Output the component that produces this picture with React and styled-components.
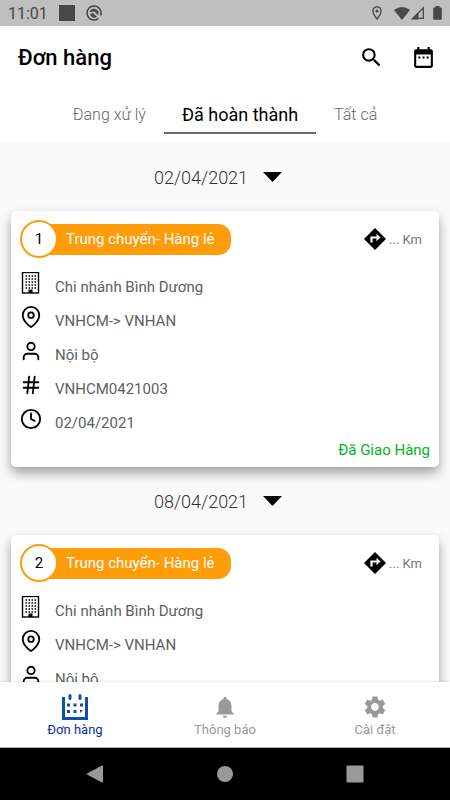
import React, { useState } from 'react';
import styled, { createGlobalStyle } from 'styled-components';
import { MdSearch, MdDateRange, MdNotifications, MdSettings } from 'react-icons/md';
import { FiMapPin, FiUser, FiHash, FiClock } from 'react-icons/fi';

const GlobalStyle = createGlobalStyle`
  * {
    box-sizing: border-box;
  }
  body {
    margin: 0;
    background: #fafafa;
    font-family: Roboto, 'Noto Sans', sans-serif;
  }
  button {
    border: 0;
    padding: 0;
    background: none;
    font: inherit;
    color: inherit;
    cursor: pointer;
  }
`;

const Screen = styled.div`
  display: flex;
  flex-direction: column;
  height: 100vh;
  overflow: hidden;
`;

const StatusBar = styled.div`
  display: flex;
  flex-shrink: 0;
  align-items: center;
  justify-content: space-between;
  height: 26px;
  padding: 0 8px;
  background: #bfbfbf;
  color: #484848;
  font-size: 16px;
`;

const StatusGroup = styled.div`
  display: flex;
  align-items: center;
  gap: ${({ $gap }) => $gap}px;

  svg {
    display: block;
  }
`;

const Header = styled.header`
  display: flex;
  flex-shrink: 0;
  align-items: center;
  justify-content: space-between;
  height: 62px;
  padding: 0 14px 0 18px;
  background: white;
`;

const Title = styled.h1`
  margin: 0;
  font-size: 22px;
  font-weight: 500;
  color: black;
`;

const Actions = styled.div`
  display: flex;
  gap: 27px;
`;

const IconButton = styled.button`
  display: flex;
  font-size: 25px;
`;

const Tabs = styled.div`
  display: flex;
  flex-shrink: 0;
  justify-content: center;
  height: 53px;
  padding: 6px 0 7px;
  background: white;
`;

const Tab = styled.button`
  && {
    padding: 2px 18px 0;
    border-bottom: 2px solid ${({ $active }) => ($active ? '#6b6b6b' : 'transparent')};
    font-size: ${({ $active }) => ($active ? 18 : 16)}px;
    font-weight: ${({ $active }) => ($active ? 400 : 300)};
    color: ${({ $active }) => ($active ? 'black' : '#666')};
  }
`;

const List = styled.main`
  flex: 1;
  min-height: 0;
  padding: 2px 11px 0;
  overflow: hidden;
`;

const DateButton = styled.button`
  && {
    display: flex;
    align-items: center;
    justify-content: center;
    gap: 15px;
    width: 100%;
    height: 68px;
    padding-right: 14px;
    font-size: 18px;
    font-weight: 300;
    color: #333;
  }
`;

const Chevron = styled.svg`
  display: block;
  width: 19px;
  height: 10px;
  fill: black;
`;

const CardContainer = styled.article`
  height: 256px;
  padding: 9px;
  border-radius: 5px;
  background: white;
  box-shadow: 0 6px 12px rgba(0, 0, 0, 0.36);
`;

const CardHeader = styled.div`
  display: flex;
  align-items: center;
  justify-content: space-between;
  padding-right: 8px;
`;

const Badge = styled.div`
  display: flex;
  align-items: center;
`;

const Circle = styled.span`
  z-index: 1;
  display: flex;
  align-items: center;
  justify-content: center;
  width: 38px;
  height: 38px;
  border: 2px solid #ff9c0a;
  border-radius: 50%;
  background: white;
  font-size: 15px;
`;

const Pill = styled.span`
  height: 31px;
  margin-left: -16px;
  padding: 0 16px 0 24px;
  border-radius: 0 13px 13px 0;
  background: #ff9c0a;
  font-size: 15px;
  line-height: 31px;
  color: white;
`;

const Distance = styled.div`
  display: flex;
  align-items: center;
  gap: 3px;
  font-size: 13px;
  color: #777;

  svg {
    width: 22px;
    height: 22px;
  }
`;

const Details = styled.ul`
  margin: 14px 0 0;
  padding: 0;
  list-style: none;
`;

const Detail = styled.li`
  display: flex;
  gap: 13px;
  height: 34px;
  font-size: 15px;
  line-height: 24px;
  color: #606060;

  svg {
    width: 22px;
    height: 22px;
    color: black;
  }

  span {
    padding-top: 3px;
  }
`;

const State = styled.div`
  text-align: right;
  font-size: 15px;
  line-height: 16px;
  color: #00b428;
`;

const BottomNav = styled.nav`
  z-index: 1;
  display: flex;
  flex-shrink: 0;
  justify-content: space-around;
  height: 66px;
  border-bottom: 1px solid #b0b0b0;
  background: white;
  box-shadow: 0 -1px 2px rgba(0, 0, 0, 0.08);
`;

const NavItem = styled.button`
  && {
    display: flex;
    flex: 1;
    flex-direction: column;
    align-items: center;
    padding-top: 12px;
    font-size: 13px;
    line-height: 18px;
    color: ${({ $active }) => ($active ? '#0a2fa5' : '#999')};
  }

  svg {
    width: 26px;
    height: 26px;
    margin-bottom: 1px;
  }
`;

const SystemBar = styled.div`
  display: flex;
  flex-shrink: 0;
  align-items: center;
  justify-content: space-around;
  height: 52px;
  padding: 0 30px;
  background: black;
`;

const SystemButton = styled.button`
  display: flex;

  svg {
    width: 18px;
    height: 18px;
    fill: #999;
  }
`;

const DirectionsIcon = () => (
  <svg viewBox="0 0 22 22">
    <path d="M11 0l11 11-11 11L0 11z" fill="black" />
    <path d="M7.500 14.500V9.500h6" fill="none" stroke="white" strokeWidth="2.200" />
    <path d="M12.500 5.800l4 3.700-4 3.700z" fill="white" />
  </svg>
);

const BuildingIcon = () => (
  <svg viewBox="0 0 22 22">
    <rect x="2.500" y="0.500" width="16" height="20.500" fill="none" stroke="currentColor" strokeWidth="1.400" />
    {[4, 7, 10, 13, 16].map((y) => (
      <path key={y} d={`M5.500 ${y}h11`} stroke="currentColor" strokeWidth="1.300" strokeDasharray="1.500 1.500" />
    ))}
    <path d="M8.500 17.500h4V21h-4z" fill="currentColor" />
  </svg>
);

const OrdersIcon = () => (
  <svg viewBox="0 0 26 26">
    <path d="M0 3h3v20h20V3h3v23H0z" fill="#0f50ae" />
    <path d="M8 1.500v3M18 1.500v3" stroke="#0f50ae" strokeWidth="3" strokeLinecap="round" />
    <path d="M5 9.500h3v3H5zM11.500 9.500h3v3h-3zM18 9.500h3v3h-3zM5 16h3v3H5zM11.500 16h3v3h-3zM18 16h3l-3 3z" fill="#0f50ae" />
  </svg>
);

const StatusIcons = () => (
  <StatusGroup $gap={12}>
    <svg width="10" height="14" viewBox="0 0 10 14">
      <path d="M5 .8A4.100 4.100 0 0 0 .9 5c0 3 4.100 8 4.100 8s4.100-5 4.100-8A4.100 4.100 0 0 0 5 .8z" fill="none" stroke="currentColor" strokeWidth="1.300" />
      <circle cx="5" cy="5" r="1.600" fill="currentColor" />
    </svg>
    <StatusGroup $gap={8}>
      <StatusGroup $gap={1}>
        <svg width="16" height="13" viewBox="0 0 16 13">
          <path d="M0 3Q8-3 16 3L8 13z" fill="currentColor" />
        </svg>
        <svg width="14" height="14" viewBox="0 0 14 14">
          <path d="M12.300 1.800v10.500H2z" fill="none" stroke="currentColor" strokeWidth="1.300" />
          <path d="M0 13.500L7.500 6v7.500z" fill="currentColor" />
        </svg>
      </StatusGroup>
      <svg width="9" height="14" viewBox="0 0 9 14">
        <path d="M2.500 0h4v1.500H8a.8.8 0 0 1 .8.8V13a.8.8 0 0 1-.8.8H1a.8.8 0 0 1-.8-.8V2.300a.8.8 0 0 1 .8-.8h1.500z" fill="currentColor" />
      </svg>
    </StatusGroup>
  </StatusGroup>
);

const tabs = ['Đang xử lý', 'Đã hoàn thành', 'Tất cả'];

const orders = [
  {
    id: 1,
    date: '02/04/2021',
    branch: 'Chi nhánh Bình Dương',
    route: 'VNHCM-> VNHAN',
    customer: 'Nội bộ',
    code: 'VNHCM0421003',
  },
  {
    id: 2,
    date: '08/04/2021',
    branch: 'Chi nhánh Bình Dương',
    route: 'VNHCM-> VNHAN',
    customer: 'Nội bộ',
    code: 'VNHCM0421003',
  },
];

const navItems = [
  { label: 'Đơn hàng', Icon: OrdersIcon },
  { label: 'Thông báo', Icon: MdNotifications },
  { label: 'Cài đặt', Icon: MdSettings },
];

const OrderCard = ({ order }) => (
  <CardContainer>
    <CardHeader>
      <Badge>
        <Circle>{order.id}</Circle>
        <Pill>Trung chuyển- Hàng lẻ</Pill>
      </Badge>
      <Distance>
        <DirectionsIcon />
        <span>... Km</span>
      </Distance>
    </CardHeader>
    <Details>
      <Detail><BuildingIcon /><span>{order.branch}</span></Detail>
      <Detail><FiMapPin /><span>{order.route}</span></Detail>
      <Detail><FiUser /><span>{order.customer}</span></Detail>
      <Detail><FiHash /><span>{order.code}</span></Detail>
      <Detail><FiClock /><span>{order.date}</span></Detail>
    </Details>
    <State>Đã Giao Hàng</State>
  </CardContainer>
);

const App = () => {
  const [tab, setTab] = useState(1);
  const [page, setPage] = useState(0);

  return (
    <Screen>
      <GlobalStyle />
      <StatusBar>
        <StatusGroup $gap={11}>
          <span>11:01</span>
          <svg width="16" height="16" viewBox="0 0 16 16">
            <path d="M0 0h16v16H0z" fill="currentColor" />
          </svg>
          <svg width="16" height="16" viewBox="0 0 16 16">
            <path d="M12.500 13.400A7 7 0 1 1 14.600 10.500" fill="none" stroke="currentColor" strokeWidth="1.500" />
            <path d="M3.500 7C5 3 10 2.500 12.500 6.500L12.300 10.500 8.500 6.500z" fill="currentColor" />
            <path d="M4 9l3-1 4 4C8 13.500 5 12.500 4 9z" fill="currentColor" />
          </svg>
        </StatusGroup>
        <StatusIcons />
      </StatusBar>
      <Header>
        <Title>Đơn hàng</Title>
        <Actions>
          <IconButton aria-label="Tìm kiếm"><MdSearch /></IconButton>
          <IconButton aria-label="Chọn ngày"><MdDateRange /></IconButton>
        </Actions>
      </Header>
      <Tabs>
        {tabs.map((label, index) => (
          <Tab key={label} $active={index === tab} onClick={() => setTab(index)}>{label}</Tab>
        ))}
      </Tabs>
      <List>
        {orders.map((order) => (
          <section key={order.id}>
            <DateButton>
              {order.date}
              <Chevron viewBox="0 0 19 10"><path d="M0 0h19L9.500 10z" /></Chevron>
            </DateButton>
            <OrderCard order={order} />
          </section>
        ))}
      </List>
      <BottomNav>
        {navItems.map(({ label, Icon }, index) => (
          <NavItem key={label} $active={index === page} onClick={() => setPage(index)}>
            <Icon />
            {label}
          </NavItem>
        ))}
      </BottomNav>
      <SystemBar>
        <SystemButton aria-label="Back">
          <svg viewBox="0 0 18 18"><path d="M17 1v16a1 1 0 0 1-1 .5L1 9.500a.6.6 0 0 1 0-1L16 .5a1 1 0 0 1 1 .5z" /></svg>
        </SystemButton>
        <SystemButton aria-label="Home">
          <svg viewBox="0 0 18 18"><circle cx="9" cy="9" r="8" /></svg>
        </SystemButton>
        <SystemButton aria-label="Recent">
          <svg viewBox="0 0 18 18"><rect x="0.500" y="0.500" width="17" height="17" rx="1" /></svg>
        </SystemButton>
      </SystemBar>
    </Screen>
  );
};

export default App;
